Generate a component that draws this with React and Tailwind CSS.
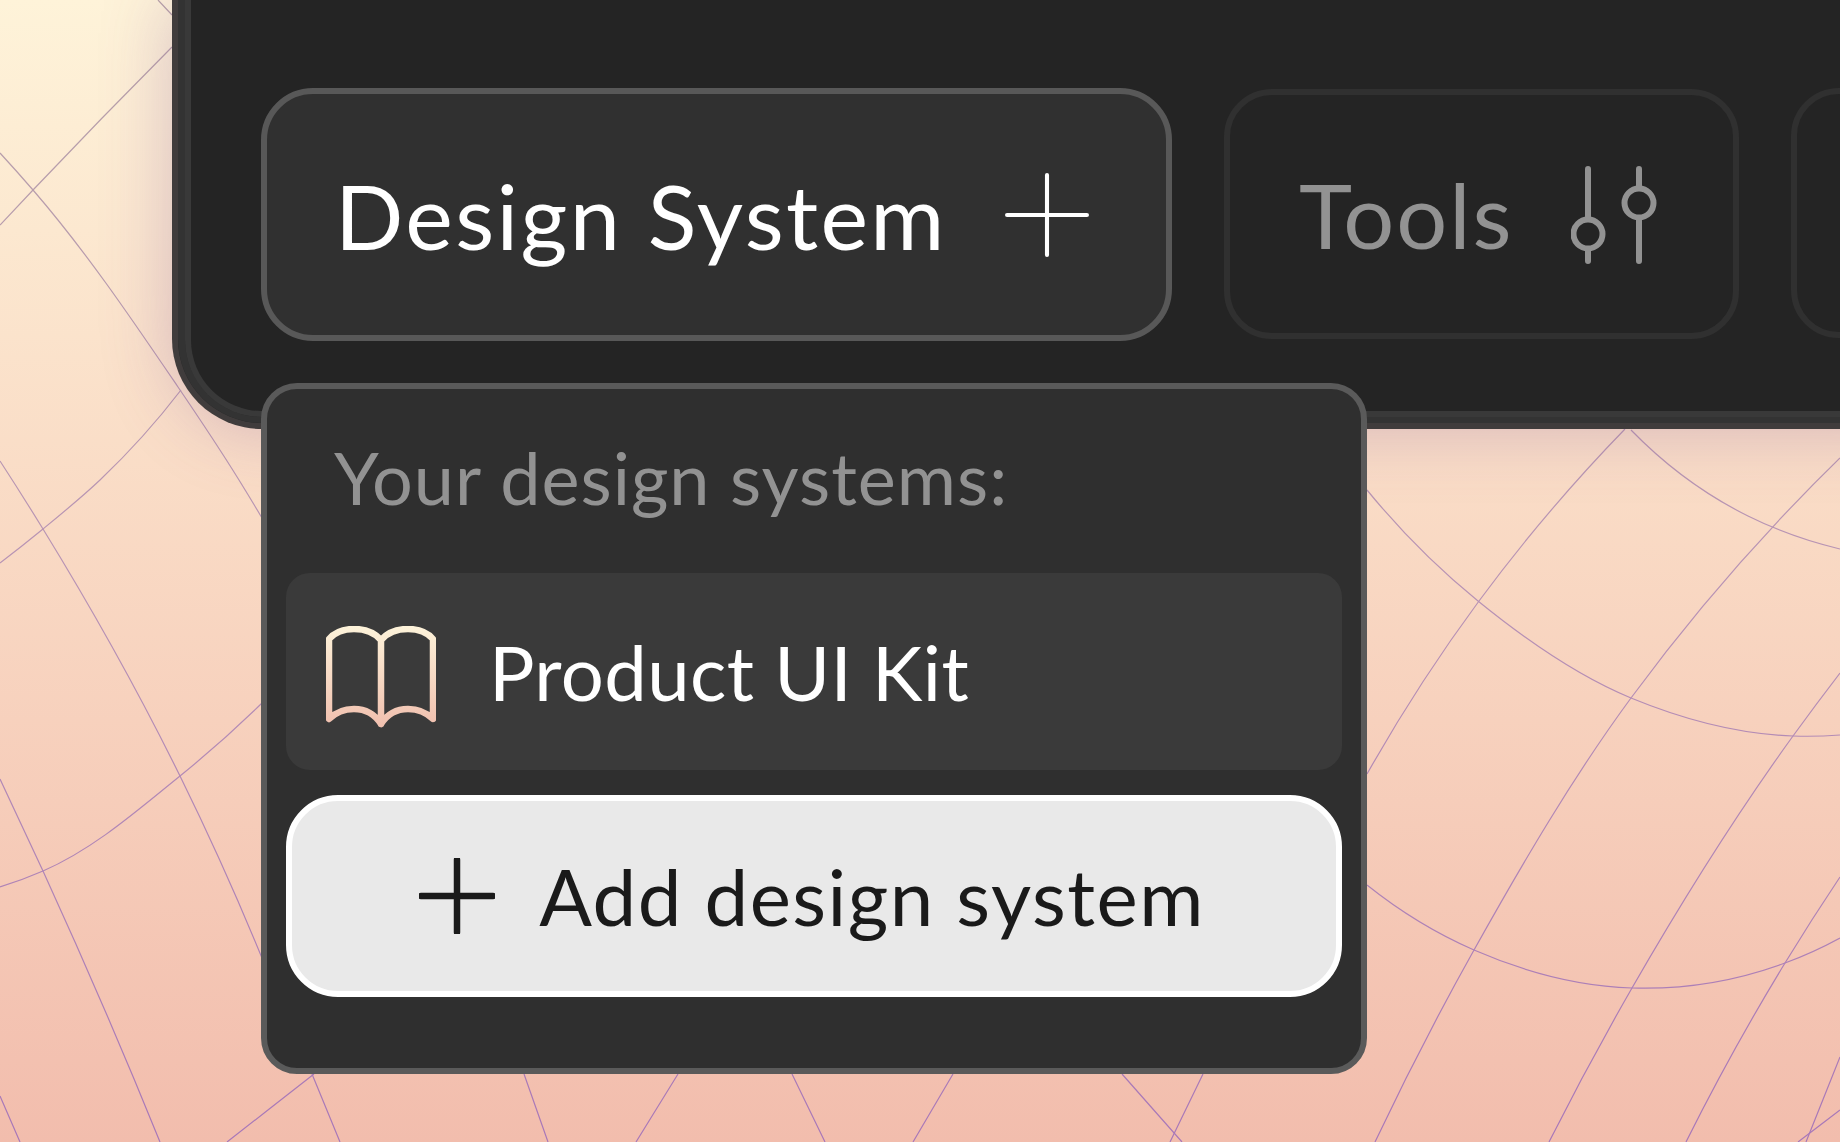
import React from 'react';

// hand traced mesh lines, full size coordinates
const meshLines = [
  [[158, 0], [172, 15]],
  [[0, 153], [33, 190], [178, 387], [239, 480], [262, 518]],
  [[0, 225], [33, 190], [172, 47]],
  [[0, 461], [43, 529], [180, 776], [262, 958]],
  [[0, 779], [43, 871], [160, 1142]],
  [[0, 1096], [20, 1142]],
  [[0, 563], [43, 529], [100, 480], [181, 390]],
  [[0, 887], [43, 871], [180, 776], [262, 703]],
  [[227, 1142], [314, 1074]],
  [[312, 1074], [340, 1142]],
  [[524, 1074], [548, 1142]],
  [[678, 1074], [636, 1142]],
  [[792, 1074], [825, 1142]],
  [[953, 1074], [913, 1142]],
  [[1122, 1074], [1182, 1142]],
  [[1203, 1074], [1170, 1142]],
  [[1367, 490], [1478, 601], [1631, 698], [1793, 736], [1840, 735]],
  [[1367, 885], [1474, 950], [1632, 988], [1785, 963], [1840, 938]],
  [[1625, 429], [1479, 601], [1367, 774]],
  [[1840, 458], [1631, 698], [1474, 950], [1375, 1142]],
  [[1840, 673], [1793, 736], [1632, 988], [1549, 1142]],
  [[1840, 877], [1785, 963], [1686, 1142]],
  [[1840, 1057], [1806, 1142]],
  [[1840, 1110], [1798, 1142]],
  [[1631, 430], [1748, 516], [1840, 549]],
];

// spline with tangents scaled by segment length so uneven points don't kink
const smoothPath = (pts) => {
  const n = pts.length;
  const dist = (a, b) => Math.hypot(b[0] - a[0], b[1] - a[1]);
  const m = pts.map(() => [0, 0]);
  for (let i = 1; i < n - 1; i++) {
    const d0 = dist(pts[i - 1], pts[i]);
    const d1 = dist(pts[i], pts[i + 1]);
    for (const k of [0, 1]) {
      const s0 = (pts[i][k] - pts[i - 1][k]) / d0;
      const s1 = (pts[i + 1][k] - pts[i][k]) / d1;
      m[i][k] = (s0 * d1 + s1 * d0) / (d0 + d1);
    }
  }
  if (n === 2) {
    const d = dist(pts[0], pts[1]);
    m[0] = [(pts[1][0] - pts[0][0]) / d, (pts[1][1] - pts[0][1]) / d];
    m[1] = m[0];
  } else {
    const d0 = dist(pts[0], pts[1]);
    const dl = dist(pts[n - 2], pts[n - 1]);
    for (const k of [0, 1]) {
      m[0][k] = (2 * (pts[1][k] - pts[0][k])) / d0 - m[1][k];
      m[n - 1][k] = (2 * (pts[n - 1][k] - pts[n - 2][k])) / dl - m[n - 2][k];
    }
  }
  let d = `M${pts[0][0]} ${pts[0][1]}`;
  for (let i = 0; i < n - 1; i++) {
    const h = dist(pts[i], pts[i + 1]) / 3;
    d += `C${pts[i][0] + m[i][0] * h} ${pts[i][1] + m[i][1] * h} ${pts[i + 1][0] - m[i + 1][0] * h} ${pts[i + 1][1] - m[i + 1][1] * h} ${pts[i + 1][0]} ${pts[i + 1][1]}`;
  }
  return d;
};

const Mesh = () => (
  <svg className="absolute inset-0" width="1840" height="1142" viewBox="0 0 1840 1142" fill="none">
    <defs>
      <linearGradient id="meshStroke" gradientUnits="userSpaceOnUse" x1="0" y1="0" x2="0" y2="1142">
        <stop offset="0" stopColor="#b7a2a8" />
        <stop offset="0.5" stopColor="#b893b4" />
        <stop offset="1" stopColor="#a877b8" />
      </linearGradient>
    </defs>
    {meshLines.map((pts, i) => (
      <path key={i} d={smoothPath(pts)} stroke="url(#meshStroke)" strokeWidth="1.2" />
    ))}
  </svg>
);

const PlusIcon = ({ size, stroke, color }) => (
  <svg width={size} height={size} viewBox="0 0 82 82" fill="none" stroke={color} strokeWidth={stroke} strokeLinecap="round">
    <path d="M2 41H80M41 2V80" />
  </svg>
);

const SlidersIcon = () => (
  <svg className="mt-[2px]" width="86" height="98" viewBox="0 0 86 98" fill="none" stroke="#929292" strokeWidth="6" strokeLinecap="round">
    <path d="M17 3V52M17 84V95" />
    <circle cx="17" cy="68" r="14.5" />
    <path d="M68 3V21M68 53V95" />
    <circle cx="68" cy="37" r="14.5" />
  </svg>
);

const BookIcon = () => (
  <svg className="mt-[10px]" width="110" height="102" viewBox="0 0 110 102" fill="none" strokeWidth="6.5" strokeLinecap="round" strokeLinejoin="round">
    <defs>
      <linearGradient id="bookStroke" gradientUnits="userSpaceOnUse" x1="0" y1="0" x2="0" y2="102">
        <stop offset="0" stopColor="#fdf3da" />
        <stop offset="1" stopColor="#f0bfae" />
      </linearGradient>
    </defs>
    <path
      stroke="url(#bookStroke)"
      d="M3 13C9 6 18 3 28 3C38 3 48 6 55 14C62 6 72 3 82 3C92 3 101 6 107 13V93C100 86 91 83 82 83C72 83 62 87 55 98C48 87 38 83 28 83C19 83 10 86 3 93ZM55 14V98"
    />
  </svg>
);

export default function App() {
  return (
    <div
      className="relative w-[1840px] h-[1142px] overflow-hidden bg-gradient-to-b from-[#fef3d9] to-[#f2bdad]"
      style={{ fontFamily: 'Lato, "Noto Sans", sans-serif' }}
    >
      <Mesh />

      {/* toolbar panel, runs off the top and right edge */}
      <div className="relative ml-[172px] w-[1800px] h-[429px] rounded-b-[90px] bg-[#242424] border-x-[6px] border-b-[6px] border-[#403c3c] shadow-[0_0_70px_rgba(130,80,150,0.3)]">
        <div className="h-full rounded-bl-[84px] border-l-[7px] border-b-[6px] border-[#333333]">
          <div className="h-full rounded-bl-[77px] border-l-[6px] border-b-[6px] border-[#393939] pt-[88px] pl-[70px] flex items-start gap-[52px]">
            <button className="w-[911px] h-[253px] shrink-0 rounded-[52px] border-[6px] border-[#585858] bg-[#303030] flex items-center pl-[68px] gap-[58px] text-white text-[90px] tracking-[2.4px] leading-none">
              <span>Design System</span>
              <PlusIcon size={84} stroke={4} color="#ffffff" />
            </button>
            <button className="mt-[1px] w-[515px] h-[250px] shrink-0 rounded-[48px] border-[6px] border-[#303030] flex items-center pl-[69px] gap-[58px] text-[#929292] text-[90px] tracking-[2px] leading-none">
              <span>Tools</span>
              <SlidersIcon />
            </button>
            <div className="w-[400px] h-[250px] shrink-0 rounded-[48px] border-[6px] border-[#303030]" />
          </div>
        </div>
      </div>

      {/* dropdown menu */}
      <div className="absolute left-[261px] top-[383px] w-[1106px] h-[691px] rounded-[36px] border-[6px] border-[#5a5a5a] bg-[#2f2f2f] px-[19px]">
        <p className="pl-[48px] pt-[52px] h-[184px] text-[#929292] text-[72px] tracking-[1px] leading-none">Your design systems:</p>
        <div className="h-[197px] rounded-[24px] bg-[#3a3a3a] flex items-center pl-[40px] gap-[53px] text-white text-[76px] tracking-[0.4px] leading-none">
          <BookIcon />
          <span>Product UI Kit</span>
        </div>
        <button className="mt-[25px] w-full h-[202px] pr-[4px] rounded-[52px] border-[6px] border-white bg-[#e9e9e9] flex items-center justify-center gap-[44px] text-[#1a1a1a] text-[78px] tracking-[1.5px] leading-none">
          <PlusIcon size={76} stroke={7} color="#1a1a1a" />
          <span>Add design system</span>
        </button>
      </div>
    </div>
  );
}
